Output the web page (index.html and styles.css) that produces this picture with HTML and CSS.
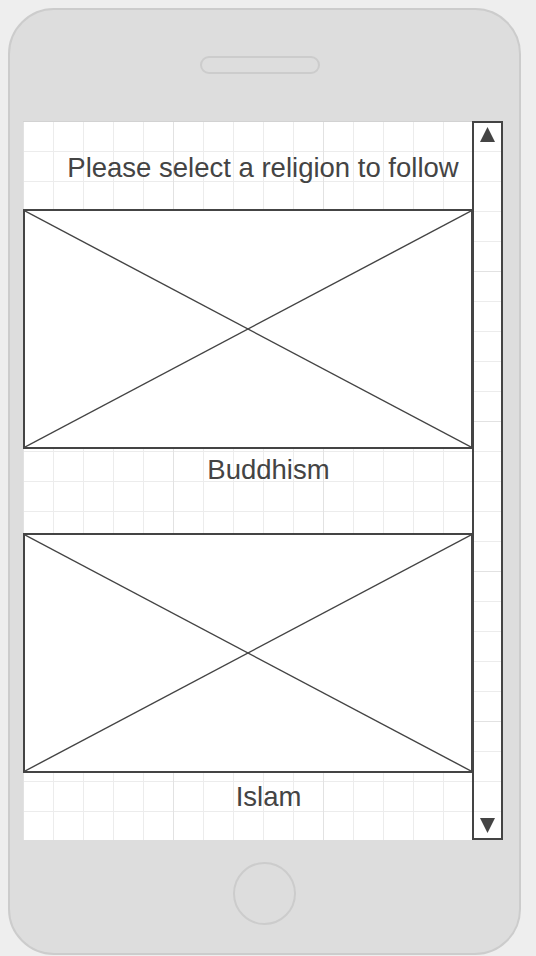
FILE: index.html
```html
<!DOCTYPE html>
<html lang="en">
<head>
<meta charset="utf-8">
<title>Religion select</title>
<link rel="stylesheet" href="styles.css">
</head>
<body>
<div class="phone">
  <div class="speaker"></div>
  <div class="screen">
    <div class="content">
      <div class="title">Please select a religion to follow</div>
      <div class="placeholder">
        <svg class="cross" viewBox="0 0 100 100" preserveAspectRatio="none"><line x1="0" y1="0" x2="100" y2="100"/><line x1="100" y1="0" x2="0" y2="100"/></svg>
      </div>
      <div class="label label-first">Buddhism</div>
      <div class="placeholder placeholder-second">
        <svg class="cross" viewBox="0 0 100 100" preserveAspectRatio="none"><line x1="0" y1="0" x2="100" y2="100"/><line x1="100" y1="0" x2="0" y2="100"/></svg>
      </div>
      <div class="label label-second">Islam</div>
    </div>
    <div class="scrollbar">
      <svg class="arrow" viewBox="0 0 15 15"><polygon points="7.5,0 15,15 0,15"/></svg>
      <svg class="arrow" viewBox="0 0 15 15"><polygon points="0,0 15,0 7.5,15"/></svg>
    </div>
  </div>
  <div class="home"></div>
</div>
</body>
</html>
```
FILE: styles.css
```css
html, body {
  margin: 0;
  padding: 0;
  background: #eeeeee;
}
body {
  width: 536px;
  height: 956px;
  overflow: hidden;
  font-family: "Liberation Sans", Arial, sans-serif;
}
.phone {
  box-sizing: border-box;
  margin: 8px 0 0 8px;
  width: 513px;
  height: 947px;
  background: #dddddd;
  border: 2px solid #cccccc;
  border-radius: 46px;
  display: flex;
  flex-direction: column;
  align-items: flex-start;
}
.speaker {
  box-sizing: border-box;
  margin: 46px 0 0 190px;
  width: 120px;
  height: 18px;
  border: 2px solid #cccccc;
  border-radius: 9px;
}
.screen {
  box-sizing: border-box;
  margin: 47px 0 0 13px;
  width: 480px;
  height: 719px;
  display: flex;
  border-top: 1px solid #d2d2d2;
  background-color: #ffffff;
  background-image:
    linear-gradient(to right, #e2e2e2 1px, transparent 1px),
    linear-gradient(to bottom, #e2e2e2 1px, transparent 1px),
    linear-gradient(to right, #ececec 1px, transparent 1px),
    linear-gradient(to bottom, #ececec 1px, transparent 1px);
  background-size: 150px 150px, 150px 150px, 30px 30px, 30px 30px;
  background-position: 0 -1px, 0 -1px, 0 -1px, 0 -1px;
}
.content {
  width: 450px;
  flex: none;
  display: flex;
  flex-direction: column;
  color: #444444;
  font-size: 27.5px;
  line-height: 30px;
}
.title {
  padding: 31px 0 0 30px;
  text-align: center;
}
.placeholder {
  box-sizing: border-box;
  margin-top: 26px;
  width: 450px;
  height: 240px;
  border: 2px solid #444444;
  background: #ffffff;
}
.placeholder-second {
  margin-top: 48px;
}
.cross {
  display: block;
  width: 100%;
  height: 100%;
}
.cross line {
  stroke: #444444;
  stroke-width: 1.4;
  vector-effect: non-scaling-stroke;
}
.label {
  padding-left: 41px;
  text-align: center;
}
.label-first {
  padding-top: 6px;
}
.label-second {
  padding-top: 9px;
}
.scrollbar {
  box-sizing: border-box;
  margin: -1px 0 0 -1px;
  width: 32px;
  height: 719px;
  border: 2px solid #444444;
  display: flex;
  flex-direction: column;
  justify-content: space-between;
  align-items: center;
  padding: 4px 0 5px;
}
.arrow {
  display: block;
  width: 15px;
  height: 15px;
}
.arrow polygon {
  fill: #444444;
}
.home {
  box-sizing: border-box;
  margin: 22px 0 0 223px;
  width: 63px;
  height: 63px;
  border: 2px solid #cccccc;
  border-radius: 50%;
}
```
